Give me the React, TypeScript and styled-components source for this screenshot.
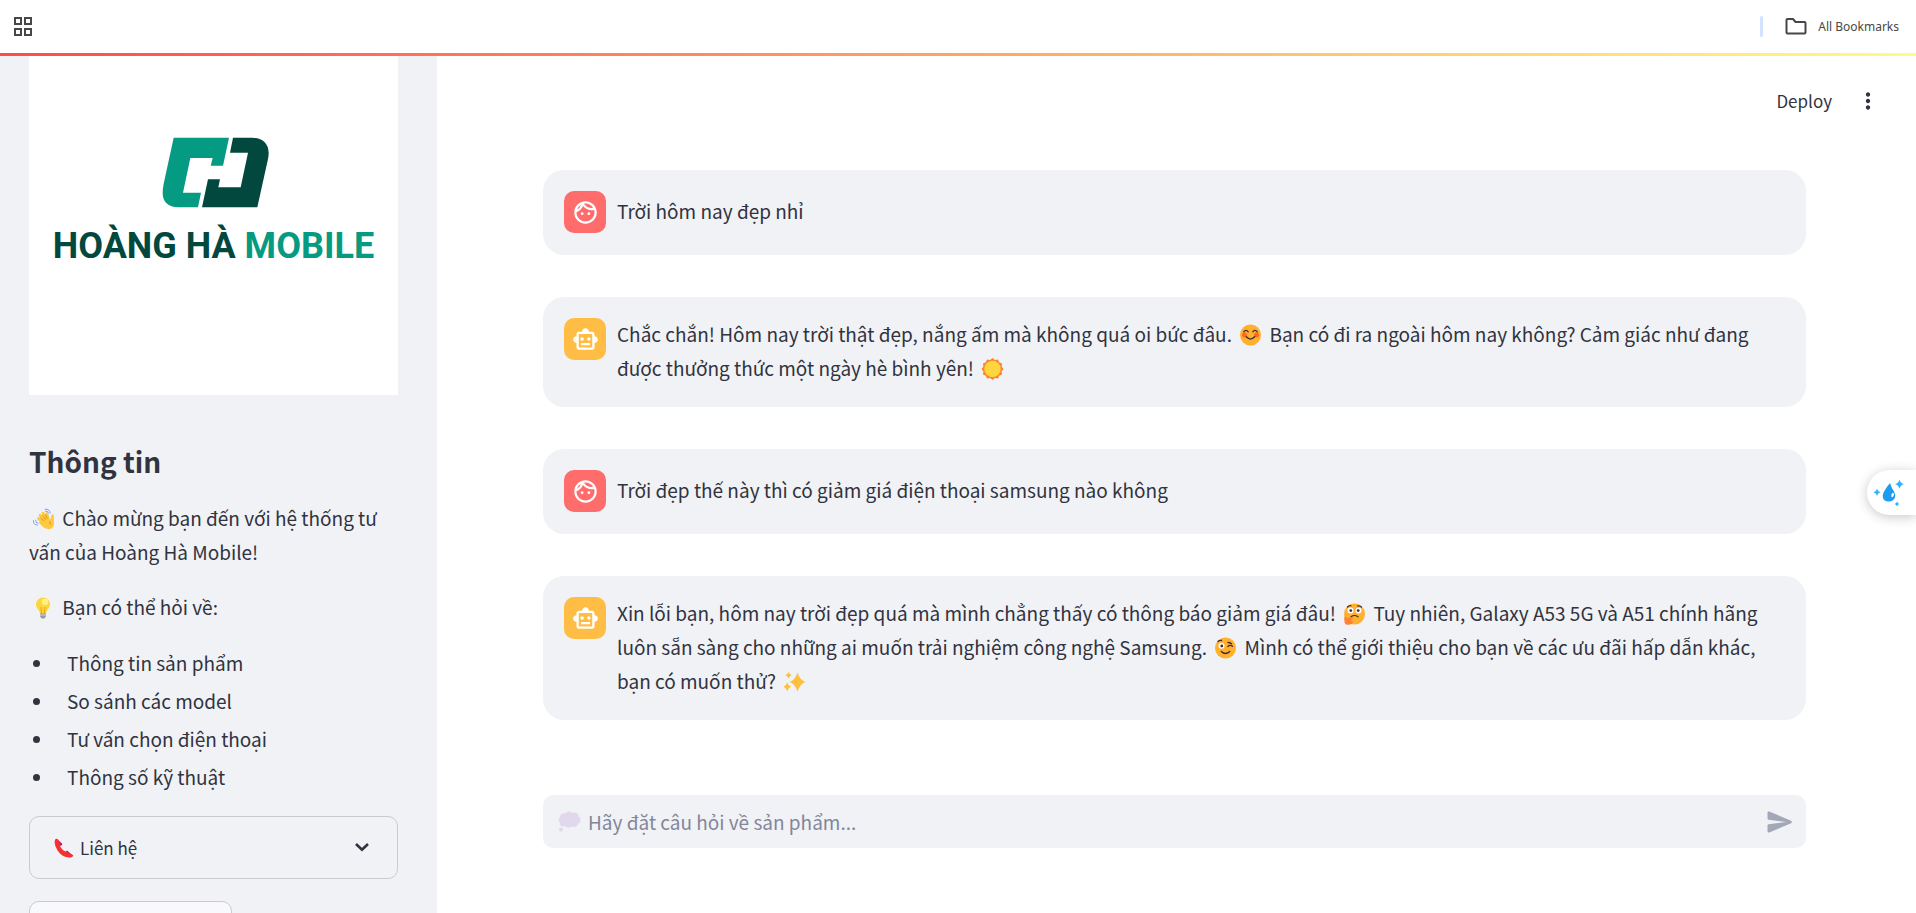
import React from "react";
import styled, { createGlobalStyle } from "styled-components";
import { MdMoreVert, MdOutlineFace, MdOutlineSmartToy } from "react-icons/md";

const GlobalStyle = createGlobalStyle`
  *, *::before, *::after { box-sizing: border-box; }
  body {
    margin: 0;
    background: #ffffff;
    color: #31333f;
    font-family: "Noto Sans CJK SC", "Noto Sans", sans-serif;
    font-size: 19px;
    line-height: 34px;
  }
  button, input { font: inherit; color: inherit; }
  p, h2, ul { margin: 0; padding: 0; }
`;

const Page = styled.div`
  height: 100vh;
  display: flex;
  flex-direction: column;
  overflow: hidden;
`;

const BookmarksBar = styled.nav`
  flex: none;
  height: 53px;
  padding: 0 17px 0 13px;
  display: flex;
  align-items: center;
  justify-content: space-between;
  color: #474747;
`;

const BarGroup = styled.div`
  display: flex;
  align-items: center;
  gap: 22px;
`;

const BarDivider = styled.span`
  width: 3px;
  height: 21px;
  border-radius: 2px;
  background: #d3e3fd;
`;

const BarButton = styled.button`
  display: flex;
  align-items: center;
  gap: 11px;
  padding: 0;
  border: 0;
  background: none;
  font-family: "Noto Sans", sans-serif;
  font-size: 12px;
  line-height: 20px;
`;

const Decoration = styled.div`
  flex: none;
  height: 3px;
  background: linear-gradient(90deg, #ff4b4b, #fffd80);
`;

const Body = styled.div`
  flex: 1;
  min-height: 0;
  display: flex;
`;

const Sidebar = styled.aside`
  flex: none;
  width: 437px;
  padding: 0 39px 0 29px;
  background: #f0f2f6;
  overflow: hidden;
`;

const Brand = styled.div`
  height: 339px;
  padding-top: 81px;
  display: flex;
  flex-direction: column;
  align-items: center;
  gap: 13px;
  background: #ffffff;
`;

const Wordmark = styled.div`
  font-family: Roboto, sans-serif;
  font-size: 36px;
  font-weight: 700;
  line-height: 48px;
  white-space: nowrap;
  color: #03483e;
`;

const WordmarkAccent = styled.span`
  color: #059a82;
`;

const Heading = styled.h2`
  margin-top: 42px;
  font-size: 28px;
  font-weight: 700;
  line-height: 48px;
`;

const Paragraph = styled.p<{ $top: number }>`
  margin-top: ${(p) => p.$top}px;
`;

const Topics = styled.ul`
  margin-top: 22px;
  display: flex;
  flex-direction: column;
  gap: 4px;
  list-style: none;
`;

const Topic = styled.li`
  display: flex;
  align-items: center;
  gap: 27px;
  padding-left: 4px;

  &::before {
    content: "";
    width: 7px;
    height: 7px;
    border-radius: 50%;
    background: #31333f;
  }
`;

const Expander = styled.button`
  width: 100%;
  height: 63px;
  margin-top: 22px;
  padding: 0 22px 0 24px;
  display: flex;
  align-items: center;
  justify-content: space-between;
  border: 1px solid #cacbd1;
  border-radius: 10px;
  background: none;
  font-size: 17px;
`;

const ExpanderLabel = styled.span`
  display: flex;
  align-items: center;
  gap: 6px;
`;

const SidebarButton = styled.button`
  display: block;
  width: 203px;
  height: 53px;
  margin-top: 22px;
  border: 1px solid #cacbd1;
  border-radius: 10px;
  background: #f9f9fb;
`;

const Main = styled.main`
  flex: 1;
  min-width: 0;
  display: flex;
  flex-direction: column;
  padding: 0 110px 65px 106px;
`;

const Toolbar = styled.header`
  height: 90px;
  margin-right: -75px;
  display: flex;
  align-items: center;
  justify-content: flex-end;
  gap: 23px;
`;

const ToolbarButton = styled.button`
  display: flex;
  padding: 0;
  border: 0;
  background: none;
  font-size: 17px;
`;

const Messages = styled.div`
  margin-top: 24px;
  display: flex;
  flex-direction: column;
  gap: 42px;
`;

const Message = styled.article`
  display: flex;
  gap: 11px;
  padding: 20px 21px 22px;
  border-radius: 21px;
  background: #f0f2f6;
`;

const Avatar = styled.div<{ $bot?: boolean }>`
  flex: none;
  width: 42px;
  height: 42px;
  margin-top: 1px;
  display: flex;
  align-items: center;
  justify-content: center;
  border-radius: 10px;
  color: #ffffff;
  background: ${(p) => (p.$bot ? "#ffbd45" : "#ff6c6c")};
`;

const MessageText = styled.p<{ $single?: boolean }>`
  flex: 1;
  min-width: 0;
  padding-top: ${(p) => (p.$single ? 4 : 0)}px;
`;

const EmojiSvg = styled.svg`
  width: 29px;
  height: 22px;
  vertical-align: -4px;
`;

const PhoneSvg = styled.svg`
  width: 20px;
  height: 20px;
`;

const ChatForm = styled.form`
  margin-top: auto;
  height: 53px;
  padding: 0 11px 0 12px;
  display: flex;
  align-items: center;
  gap: 4px;
  border-radius: 10px;
  background: #f0f2f6;
`;

const ChatInput = styled.input`
  flex: 1;
  min-width: 0;
  padding: 0;
  border: 0;
  outline: 0;
  background: none;

  &::placeholder {
    color: #83869a;
    opacity: 1;
  }
`;

const SendButton = styled.button`
  display: flex;
  padding: 0;
  border: 0;
  background: none;
  color: #a3a8b8;
`;

const FloatingTool = styled.button`
  position: fixed;
  right: 0;
  top: 470px;
  width: 49px;
  height: 45px;
  padding: 0 10px 0 5px;
  display: flex;
  align-items: center;
  border: 0;
  border-radius: 23px 0 0 23px;
  background: #ffffff;
  box-shadow: 0 2px 12px rgba(0, 0, 0, 0.22);
`;

type EmojiName = "wave" | "bulb" | "smile" | "sun" | "think" | "wink" | "sparkles" | "thought";

const emojiLabels: Record<EmojiName, string> = {
  wave: "👋",
  bulb: "💡",
  smile: "😊",
  sun: "🌞",
  think: "🤔",
  wink: "😉",
  sparkles: "✨",
  thought: "💭",
};

const sunPoints = Array.from({ length: 24 }, (_, i) => {
  const r = i % 2 ? 9.4 : 11;
  const a = (i * Math.PI) / 12;
  return `${(14.5 + r * Math.sin(a)).toFixed(2)},${(11 - r * Math.cos(a)).toFixed(2)}`;
}).join(" ");

const emojiArt: Record<EmojiName, React.ReactNode> = {
  wave: (
    <>
      <g fill="none" stroke="#ffc83d" strokeWidth="2.8" strokeLinecap="round">
        <path d="M15 15.5 L9.5 10.5 M16 13.5 L11 7.3 M18 12 L14 5.2 M20 12 L17.6 5.8" />
        <path d="M23 14 L23.6 8" />
      </g>
      <path d="M12 12.5 L19 8.5 L22 12 L24.9 10.5 V16.5 Q24 21 19.5 21.3 Q16 21.3 13 18 L9.8 14.5Z" fill="#ffc83d" />
      <path d="M11.3 9.6 L15 13.2 M13.2 7 L16.6 11.6 M16.4 6.8 L18.4 10.6" stroke="#d67d00" strokeWidth="0.7" fill="none" />
      <path d="M21 13.2 Q20.4 15 21.6 16.6" stroke="#d67d00" strokeWidth="0.7" fill="none" />
      <g fill="none" stroke="#5092ff" strokeWidth="0.8" strokeLinecap="round">
        <path d="M16.2 1.2 Q20.6 .6 21.2 5 M16.4 3 Q19 2.6 19.6 5.2" />
        <path d="M4.4 12.6 Q4 17 8.4 17 M6.6 12.2 Q6.2 15 9 15.2" />
      </g>
    </>
  ),
  bulb: (
    <>
      <path d="M14 0.5 A7 7 0 0 1 21 7.5 C21 11.5 17.5 12.5 17 16.5 H11 C10.5 12.5 7 11.5 7 7.5 A7 7 0 0 1 14 .5Z" fill="#fcd53f" />
      <circle cx="16" cy="5" r="3.2" fill="#fff478" />
      <path d="M12.5 16 L12 10 M15.5 16 L16 10" stroke="#f59f0a" strokeWidth="1" />
      <path d="M11.2 16.2 H16.8 V19.5 L15.5 21.5 H12.5 L11.2 19.5Z" fill="#9b9b9b" />
      <path d="M11.2 18 H16.8" stroke="#d3d3d3" />
    </>
  ),
  smile: (
    <>
      <circle cx="14.5" cy="11" r="10.5" fill="#ffb02e" />
      <circle cx="8.5" cy="11" r="2.5" fill="#ff6723" />
      <circle cx="20.5" cy="11" r="2.5" fill="#ff6723" />
      <path d="M7.8 7.8 Q10 5 12.2 7.8 M16.8 7.8 Q19 5 21.2 7.8 M10.3 12.8 Q14.5 17.3 18.7 12.8" fill="none" stroke="#402a32" strokeWidth="1.3" strokeLinecap="round" />
    </>
  ),
  sun: (
    <>
      <polygon points={sunPoints} fill="#ff822d" />
      <circle cx="14.5" cy="11" r="8.2" fill="#fcd53f" />
    </>
  ),
  think: (
    <>
      <circle cx="14.5" cy="11" r="10.5" fill="#ffb02e" />
      <circle cx="10.5" cy="7.5" r="3" fill="#ffffff" />
      <circle cx="18.5" cy="7.5" r="3" fill="#ffffff" />
      <circle cx="10.8" cy="7.6" r="1.4" fill="#402a32" />
      <circle cx="18.2" cy="7.6" r="1.4" fill="#402a32" />
      <path d="M11 13.8 Q14.5 11.2 18 13.8 M7.5 4 Q9 2.2 11 2.8 M17.5 3 Q20 2.2 21.5 4.2" fill="none" stroke="#402a32" strokeWidth="1.2" strokeLinecap="round" />
      <path d="M4.5 14 Q6 12.5 7 15 L12 14.2 Q14 14.6 12.5 16 L10.5 17.2 Q14 18.5 12 20.8 Q9 22.5 6 21.5 Q3.6 19.5 4.5 14Z" fill="#ff822d" />
    </>
  ),
  wink: (
    <>
      <circle cx="14.5" cy="11" r="10.5" fill="#ffb02e" />
      <circle cx="10.5" cy="8.8" r="3" fill="#ffffff" />
      <circle cx="10.8" cy="9" r="1.4" fill="#402a32" />
      <path d="M16.8 9.5 Q19 7.5 21.5 9.3 M17 5.5 Q19 5.5 20.5 6.8 M7 4.5 Q8.5 3 10.5 3.5 M10.3 14.5 Q14.5 18.5 18.7 14.5" fill="none" stroke="#402a32" strokeWidth="1.3" strokeLinecap="round" />
    </>
  ),
  sparkles: (
    <g fill="#fcc03c">
      <path d="M17.5 1.5 Q19.8 9 25.5 11 Q19.8 13 17.5 20.5 Q15.2 13 9.5 11 Q15.2 9 17.5 1.5Z" />
      <path d="M8.5 1 Q9.4 3.5 11.7 4.2 Q9.4 4.9 8.5 7.5 Q7.6 4.9 5.3 4.2 Q7.6 3.5 8.5 1Z" />
      <path d="M7.2 11.5 Q8.3 14.9 11 15.8 Q8.3 16.7 7.2 20.2 Q6.1 16.7 3.4 15.8 Q6.1 14.9 7.2 11.5Z" />
    </g>
  ),
  thought: (
    <g fill="#e2d8ec">
      <circle cx="9" cy="6" r="3.8" />
      <circle cx="14" cy="4.8" r="4.3" />
      <circle cx="19.5" cy="5.6" r="4.2" />
      <circle cx="22" cy="9.2" r="3.6" />
      <circle cx="19" cy="12.2" r="3.8" />
      <circle cx="13.5" cy="12.8" r="3.8" />
      <circle cx="8.5" cy="12" r="3.6" />
      <circle cx="7" cy="9" r="3.2" />
      <rect x="8" y="5" width="13" height="9" />
      <circle cx="6" cy="18.5" r="2" />
    </g>
  ),
};

const Emoji = ({ name }: { name: EmojiName }) => (
  <EmojiSvg viewBox="0 0 29 22" role="img" aria-label={emojiLabels[name]}>
    {emojiArt[name]}
  </EmojiSvg>
);

const BrandMark = () => (
  <svg width="108" height="72" viewBox="480 410 324 216" aria-hidden="true" overflow="visible">
    <path d="M521 412H687L669 496H632L638 473H571L549 577H603L594 621H535Q488 619 488 577Q488 566 491 550Z" fill="#059a82" />
    <path d="M699 412H757Q804 415 806 457Q806 466 804 476L772 621H606L624 537H660L655 561H722L744 457H690Z" fill="#03483e" />
  </svg>
);

const AppsIcon = () => (
  <svg width="20" height="20" viewBox="0 0 20 20" fill="none" stroke="currentColor" strokeWidth="2" aria-hidden="true">
    <path d="M2 1H8V7H2ZM12 1H18V7H12ZM2 12H8V18H2ZM12 12H18V18H12Z" />
  </svg>
);

const FolderIcon = () => (
  <svg width="22" height="18" viewBox="0 0 22 18" fill="none" stroke="currentColor" strokeWidth="2" strokeLinejoin="round" aria-hidden="true">
    <path d="M1.5 2Q1.5 1 2.5 1H8L10.5 4H19.5Q20.5 4 20.5 5V14.5Q20.5 15.5 19.5 15.5H2.5Q1.5 15.5 1.5 14.5Z" />
  </svg>
);

const ChevronIcon = () => (
  <svg width="26" height="26" viewBox="0 0 26 26" fill="none" stroke="currentColor" strokeWidth="2.6" aria-hidden="true">
    <path d="M7 9L13 14.8L19 9" />
  </svg>
);

const PhoneIcon = () => (
  <PhoneSvg viewBox="0 0 20 20" aria-hidden="true">
    <path d="M3 1L8.5 6L7 8L2.5 4ZM13 12.5L18.8 17.5L16 18.5L11.5 14Z" fill="#ca0b7b" />
    <path d="M2.5 .8Q4 1 4.5 2.5L6.5 6.8Q6 8 6.5 9Q8.5 12.8 12 13.7L18.5 16.8Q20.5 18 17.5 19.2Q9 20.5 3.5 12.5Q-.5 6 1 2Q1.5 .7 2.5 .8Z" fill="#f8312f" />
  </PhoneSvg>
);

const SendIcon = () => (
  <svg width="30" height="30" viewBox="0 0 24 24" fill="currentColor" aria-hidden="true">
    <path d="M3.4 20.4l17.45-7.48c.81-.35.81-1.49 0-1.84L3.4 3.6c-.66-.29-1.39.2-1.39.91L2 9.12c0 .5.37.93.87.99L17 12 2.87 13.88c-.5.07-.87.5-.87 1l.01 4.61c0 .71.73 1.2 1.39.91z" />
  </svg>
);

const DropIcon = () => (
  <svg width="34" height="30" viewBox="0 0 34 30" aria-hidden="true">
    <path d="M18 5Q19.5 10 22 13.5Q24 16.5 22.8 20Q20.5 24 16 23.5Q10.5 23 10.7 17.5Q11 13.5 18 5Z" fill="#1c9cf0" />
    <ellipse cx="20.6" cy="17" rx="1.2" ry="2.2" fill="#ffffff" transform="rotate(20 20.6 17)" />
    <g fill="#36b1fb">
      <path d="M27.5 1.5Q28.3 5.3 32 6.2Q28.3 7 27.5 11Q26.7 7 23 6.2Q26.7 5.3 27.5 1.5Z" />
      <path d="M5 10.8Q5.7 13.7 8.5 14.3Q5.7 15 5 18Q4.3 15 1.5 14.3Q4.3 13.7 5 10.8Z" />
      <path d="M25 23.5Q25.5 25.4 27.3 25.9Q25.5 26.4 25 28.4Q24.5 26.4 22.7 25.9Q24.5 25.4 25 23.5Z" />
    </g>
  </svg>
);

const topics = ["Thông tin sản phẩm", "So sánh các model", "Tư vấn chọn điện thoại", "Thông số kỹ thuật"];

const UserMessage = ({ children }: { children: React.ReactNode }) => (
  <Message>
    <Avatar>
      <MdOutlineFace size={27} />
    </Avatar>
    <MessageText $single>{children}</MessageText>
  </Message>
);

const BotMessage = ({ children }: { children: React.ReactNode }) => (
  <Message>
    <Avatar $bot>
      <MdOutlineSmartToy size={27} />
    </Avatar>
    <MessageText>{children}</MessageText>
  </Message>
);

export default function App() {
  return (
    <Page>
      <GlobalStyle />
      <BookmarksBar>
        <BarButton aria-label="Apps">
          <AppsIcon />
        </BarButton>
        <BarGroup>
          <BarDivider />
          <BarButton>
            <FolderIcon />
            All Bookmarks
          </BarButton>
        </BarGroup>
      </BookmarksBar>
      <Decoration />
      <Body>
        <Sidebar>
          <Brand>
            <BrandMark />
            <Wordmark>
              HOÀNG HÀ <WordmarkAccent>MOBILE</WordmarkAccent>
            </Wordmark>
          </Brand>
          <Heading>Thông tin</Heading>
          <Paragraph $top={16}>
            <Emoji name="wave" /> Chào mừng bạn đến với hệ thống tư vấn của Hoàng Hà Mobile!
          </Paragraph>
          <Paragraph $top={21}>
            <Emoji name="bulb" /> Bạn có thể hỏi về:
          </Paragraph>
          <Topics>
            {topics.map((t) => (
              <Topic key={t}>{t}</Topic>
            ))}
          </Topics>
          <Expander aria-expanded={false}>
            <ExpanderLabel>
              <PhoneIcon />
              Liên hệ
            </ExpanderLabel>
            <ChevronIcon />
          </Expander>
          <SidebarButton aria-label="Action" />
        </Sidebar>
        <Main>
          <Toolbar>
            <ToolbarButton>Deploy</ToolbarButton>
            <ToolbarButton aria-label="Menu">
              <MdMoreVert size={26} />
            </ToolbarButton>
          </Toolbar>
          <Messages>
            <UserMessage>Trời hôm nay đẹp nhỉ</UserMessage>
            <BotMessage>
              Chắc chắn! Hôm nay trời thật đẹp, nắng ấm mà không quá oi bức đâu. <Emoji name="smile" /> Bạn có đi ra
              ngoài hôm nay không? Cảm giác như đang được thưởng thức một ngày hè bình yên! <Emoji name="sun" />
            </BotMessage>
            <UserMessage>Trời đẹp thế này thì có giảm giá điện thoại samsung nào không</UserMessage>
            <BotMessage>
              Xin lỗi bạn, hôm nay trời đẹp quá mà mình chẳng thấy có thông báo giảm giá đâu! <Emoji name="think" /> Tuy
              nhiên, Galaxy A53 5G và A51 chính hãng luôn sẵn sàng cho những ai muốn trải nghiệm công nghệ Samsung.{" "}
              <Emoji name="wink" /> Mình có thể giới thiệu cho bạn về các ưu đãi hấp dẫn khác, bạn có muốn thử?{" "}
              <Emoji name="sparkles" />
            </BotMessage>
          </Messages>
          <ChatForm onSubmit={(e) => e.preventDefault()}>
            <Emoji name="thought" />
            <ChatInput aria-label="Hãy đặt câu hỏi về sản phẩm" placeholder="Hãy đặt câu hỏi về sản phẩm..." />
            <SendButton aria-label="Send">
              <SendIcon />
            </SendButton>
          </ChatForm>
        </Main>
      </Body>
      <FloatingTool aria-label="Assistant">
        <DropIcon />
      </FloatingTool>
    </Page>
  );
}
